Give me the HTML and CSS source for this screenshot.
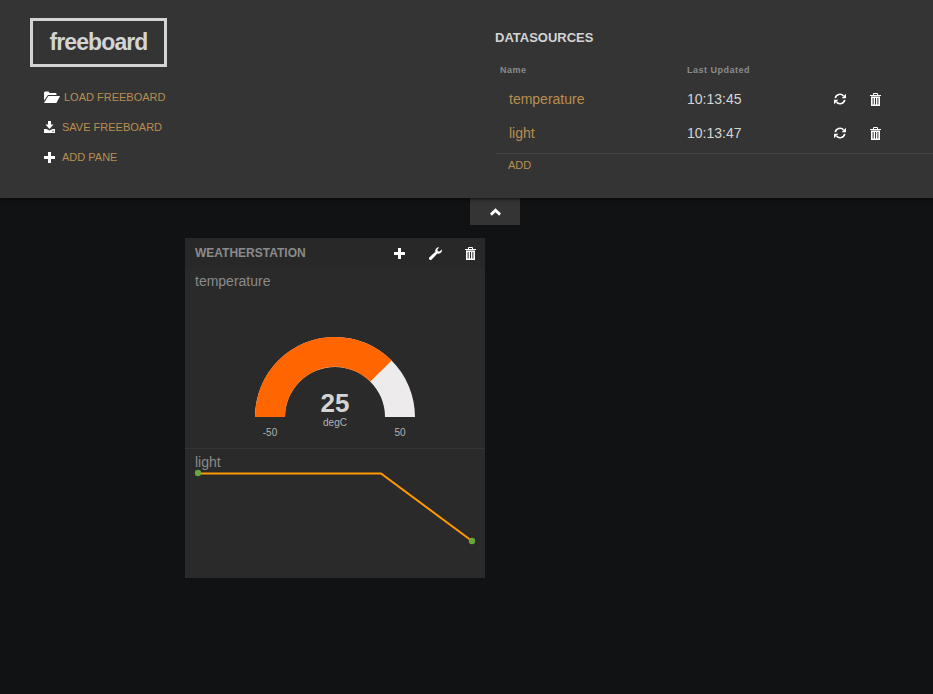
FILE: index.html
```html
<!DOCTYPE html>
<html lang="en">
    <head>
        <meta charset="UTF-8">
        <title>freeboard</title>
        <link rel="stylesheet" href="styles.css">
    </head>
    <body>
        <header class="admin-bar">
            <div class="admin-left">
                <h1 class="logo">freeboard</h1>
                <ul class="admin-menu">
                    <li class="menu-load">
                        <svg class="icon icon-folder" viewBox="0 0 16 12"><path d="M0 1.5 1 .5h3.5l1 1.5H12l.5 1v1H4L0 9.5z"/><path d="M4.3 5H16l-3.6 7H0z"/></svg>
                        <span>LOAD FREEBOARD</span>
                    </li>
                    <li class="menu-save">
                        <svg class="icon" viewBox="0 0 11 12"><path d="M4 0h3v3.500h2.500L5.500 8l-4-4.500H4z"/><path fill-rule="evenodd" d="M0 8h2.500l3 1.500 3-1.500H11v4H0zM8 9.800v.8h2v-.8z"/></svg>
                        <span>SAVE FREEBOARD</span>
                    </li>
                    <li class="menu-add">
                        <svg class="icon" viewBox="0 0 11 11"><path d="M4 0h3v4h4v3H7v4H4V7H0V4h4z"/></svg>
                        <span>ADD PANE</span>
                    </li>
                </ul>
            </div>
            <section class="datasources">
                <h2>DATASOURCES</h2>
                <div class="ds-head">
                    <span class="ds-name">Name</span>
                    <span class="ds-time">Last Updated</span>
                </div>
                <div class="ds-row">
                    <span class="ds-name">temperature</span>
                    <span class="ds-time">10:13:45</span>
                    <svg class="icon icon-refresh" viewBox="0 0 12 12"><path d="M1.300 5.200A4.800 4.800 0 0 1 9.500 2.800" class="arc"/><path d="M10.700 6.800A4.800 4.800 0 0 1 2.500 9.200" class="arc"/><path d="M12 .8v4.400H7.600zM0 11.200V6.800h4.400z"/></svg>
                    <svg class="icon icon-trash" viewBox="0 0 11 13"><path d="M3.500 2V.5h4V2M0 2.500h11" class="line"/><path fill-rule="evenodd" d="M1 3.500h9V13H1zM2.600 5v6.600h1V5zM5 5v6.600h1V5zm2.400 0v6.600h1V5z"/></svg>
                </div>
                <div class="ds-row">
                    <span class="ds-name">light</span>
                    <span class="ds-time">10:13:47</span>
                    <svg class="icon icon-refresh" viewBox="0 0 12 12"><path d="M1.300 5.200A4.800 4.800 0 0 1 9.500 2.800" class="arc"/><path d="M10.700 6.800A4.800 4.800 0 0 1 2.500 9.200" class="arc"/><path d="M12 .8v4.400H7.600zM0 11.200V6.800h4.400z"/></svg>
                    <svg class="icon icon-trash" viewBox="0 0 11 13"><path d="M3.500 2V.5h4V2M0 2.500h11" class="line"/><path fill-rule="evenodd" d="M1 3.500h9V13H1zM2.600 5v6.600h1V5zM5 5v6.600h1V5zm2.400 0v6.600h1V5z"/></svg>
                </div>
                <div class="ds-add">ADD</div>
            </section>
        </header>

        <div class="toggle-row">
            <div class="toggle-tab">
                <svg class="icon icon-chevron" viewBox="0 0 12 8"><path d="M6 0l6 5.500L10 8 6 4.200 2 8 0 5.500z"/></svg>
            </div>
        </div>

        <main class="board">
            <div class="pane">
                <div class="pane-head">
                    <h3>WEATHERSTATION</h3>
                    <svg class="icon icon-plus" viewBox="0 0 11 11"><path d="M4 0h3v4h4v3H7v4H4V7H0V4h4z"/></svg>
                    <svg class="icon icon-wrench" viewBox="0 0 13 13"><path d="M13 3.200a3.600 3.600 0 0 1-4.700 3.400L2.700 12.500a1.400 1.400 0 0 1-2.100-.1 1.400 1.400 0 0 1-.1-2.100l5.900-5.600A3.600 3.600 0 0 1 10.200.2L8.400 2.500l.3 1.800 1.800.3L12.800 2.600c.1.200.2.400.2.600z"/></svg>
                    <svg class="icon icon-trash" viewBox="0 0 11 13"><path d="M3.500 2V.5h4V2M0 2.500h11" class="line"/><path fill-rule="evenodd" d="M1 3.500h9V13H1zM2.600 5v6.600h1V5zM5 5v6.600h1V5zm2.400 0v6.600h1V5z"/></svg>
                </div>
                <div class="widget widget-gauge">
                    <div class="widget-title">temperature</div>
                    <svg class="gauge" width="300" height="180" viewBox="0 0 300 180">
                        <path class="gauge-bg" d="M70 149a80 80 0 0 1 160 0h-30a50 50 0 0 0-100 0z"/>
                        <path class="gauge-val" d="M70 149a80 80 0 0 1 136.600-56.600l-21.200 21.200A50 50 0 0 0 100 149z"/>
                        <text class="gauge-num" x="150" y="144">25</text>
                        <text class="gauge-unit" x="150" y="158">degC</text>
                        <text class="gauge-lim" x="85" y="168">-50</text>
                        <text class="gauge-lim" x="215" y="168">50</text>
                    </svg>
                </div>
                <div class="widget widget-spark">
                    <div class="widget-title">light</div>
                    <svg class="spark" width="300" height="129" viewBox="0 0 300 129">
                        <polyline points="13,24.500 196,24.500 287,92"/>
                        <circle cx="13" cy="24" r="3.200"/>
                        <circle cx="287" cy="92" r="3.200"/>
                    </svg>
                </div>
            </div>
        </main>
    </body>
</html>
```

FILE: styles.css
```css
html, body {
    margin: 0;
    height: 100%;
}
body {
    background-color: #101214;
    font-family: "Liberation Sans", Arial, sans-serif;
    color: #d3d4d4;
    overflow: hidden;
}
.icon {
    fill: #fff;
    display: block;
    flex: none;
}
.icon .arc {
    fill: none;
    stroke: #fff;
    stroke-width: 1.7;
}
.icon .line {
    fill: none;
    stroke: #fff;
    stroke-width: 1;
}

/* top bar */
.admin-bar {
    height: 198px;
    box-sizing: border-box;
    background-color: #343434;
    box-shadow: 0 0 5px #000;
    display: flex;
    position: relative;
}
.admin-left {
    width: 495px;
    flex: none;
    padding: 18px 0 0 30px;
    box-sizing: border-box;
}
.logo {
    width: 137px;
    height: 49px;
    box-sizing: border-box;
    border: 3px solid #d3d4d4;
    margin: 0;
    font-size: 23px;
    line-height: 43px;
    font-weight: bold;
    text-align: center;
    letter-spacing: -0.9px;
}
.admin-menu {
    list-style: none;
    margin: 15px 0 0;
    padding: 0 0 0 14px;
}
.admin-menu li {
    height: 30px;
    display: flex;
    align-items: center;
    font-size: 11px;
    color: #b88f51;
}
.admin-menu .icon {
    width: 11px;
    height: 11px;
    margin-right: 7px;
}
.admin-menu .menu-save .icon {
    height: 12px;
}
.admin-menu .icon-folder {
    width: 16px;
    height: 12px;
    margin-right: 4px;
}

/* datasources */
.datasources {
    flex: 1;
}
.datasources h2 {
    margin: 0;
    padding-top: 30px;
    font-size: 13px;
    line-height: 15px;
    font-weight: bold;
}
.ds-head {
    display: flex;
    margin-top: 16px;
    margin-bottom: 4px;
    padding-left: 5px;
    height: 17px;
    align-items: center;
    font-size: 9px;
    font-weight: bold;
    letter-spacing: 0.5px;
    color: #8b8b8b;
}
.ds-head .ds-name {
    width: 187px;
}
.ds-row {
    display: flex;
    align-items: center;
    height: 34px;
    font-size: 14px;
}
.ds-row .ds-name {
    width: 178px;
    margin-left: 14px;
    color: #b88f51;
}
.ds-row .ds-time {
    width: 147px;
}
.ds-row .icon-refresh {
    width: 12px;
    height: 12px;
    margin-right: 24px;
}
.ds-row .icon-trash {
    width: 11px;
    height: 13px;
}
.ds-add {
    border-top: 1px solid #424242;
    margin-top: 3px;
    padding: 5px 0 0 13px;
    font-size: 11px;
    line-height: 13px;
    color: #b88f51;
}

/* collapse tab */
.toggle-row {
    height: 27px;
    padding-left: 470px;
}
.toggle-tab {
    width: 50px;
    height: 27px;
    background-color: #343434;
    display: flex;
    justify-content: center;
    align-items: center;
}
.icon-chevron {
    width: 11px;
    height: 8px;
}

/* board */
.board {
    padding: 13px 0 0 185px;
}
.pane {
    width: 300px;
    height: 340px;
    background-color: #2a2a2a;
}
.pane-head {
    height: 30px;
    background-color: #282828;
    display: flex;
    align-items: center;
    padding: 0 9px 0 10px;
}
.pane-head h3 {
    flex: 1;
    margin: 0;
    font-size: 12px;
    font-weight: bold;
    color: #8b8b8b;
}
.pane-head .icon-plus {
    width: 11px;
    height: 11px;
    margin-right: 24px;
}
.pane-head .icon-wrench {
    width: 13px;
    height: 13px;
    margin-right: 23px;
}
.pane-head .icon-trash {
    width: 11px;
    height: 13px;
}
.widget {
    position: relative;
}
.widget-gauge {
    height: 180px;
    border-bottom: 1px solid #363636;
}
.widget-spark {
    height: 129px;
}
.widget-title {
    position: absolute;
    top: 5px;
    left: 10px;
    font-size: 14px;
    line-height: 16px;
    color: #8b8b8b;
}
.gauge, .spark {
    display: block;
}
.gauge text {
    text-anchor: middle;
    font-family: "Liberation Sans", Arial, sans-serif;
}
.gauge-bg {
    fill: #edebeb;
}
.gauge-val {
    fill: #ff6600;
}
.gauge-num {
    font-size: 26px;
    font-weight: bold;
    fill: #d3d4d4;
}
.gauge-unit, .gauge-lim {
    font-size: 10px;
    fill: #b3b4b4;
}
.spark polyline {
    fill: none;
    stroke: #ff9900;
    stroke-width: 2;
}
.spark circle {
    fill: #6aa63c;
}
```
